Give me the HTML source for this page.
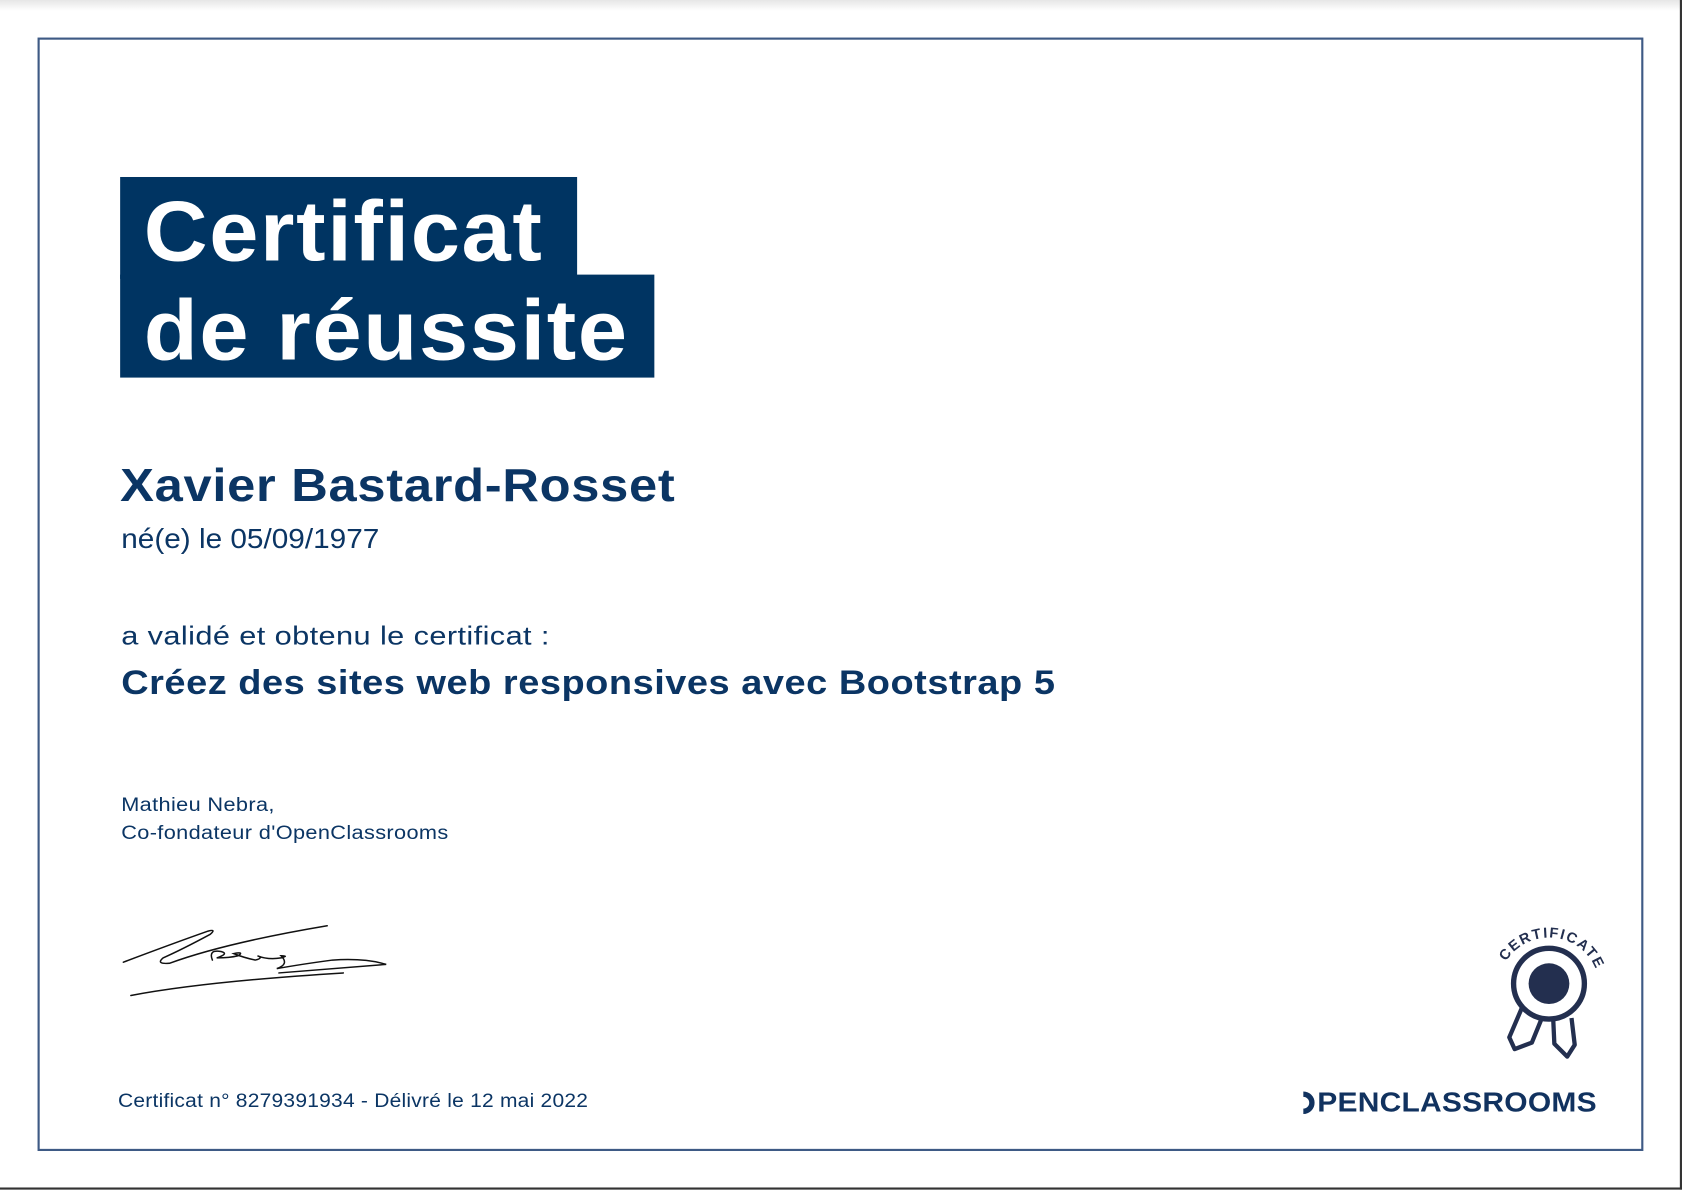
<!DOCTYPE html>
<html><head><meta charset="utf-8">
<style>
html,body{margin:0;padding:0;background:#fff;overflow:hidden;}
body{width:1682px;height:1190px;position:relative;}
#w{position:absolute;left:0;top:0;width:1568px;height:1109px;transform:scale(1.07270);transform-origin:0 0;font-family:"Liberation Sans",sans-serif;color:#0b3564;}
.abs{position:absolute;white-space:nowrap;transform-origin:0 0;}
#shadow{left:0;top:0;width:1568px;height:10px;background:linear-gradient(#e6e6e6,#fff);}
#frame{left:35px;top:35px;width:1493px;height:1034px;border:2px solid #3e5a85;}
.box{background:#003462;}
.t{color:#fff;font-weight:bold;font-size:80px;letter-spacing:1.5px;transform:scaleX(1.03);}
</style></head><body><div id="w">
<div class="abs" id="shadow"></div>
<div class="abs" style="right:0;top:0;width:2px;height:1109px;background:#333"></div>
<div class="abs" style="left:0;bottom:0;width:1568px;height:2px;background:#333"></div>
<div class="abs" id="frame"></div>

<div class="abs box" style="left:112px;top:165px;width:426px;height:95px"></div>
<div class="abs box" style="left:112px;top:256px;width:498px;height:96px"></div>
<div class="abs t" style="left:134px;top:170px;line-height:92px">Certificat</div>
<div class="abs t" style="left:134px;top:262px;line-height:92px">de réussite</div>

<div class="abs" style="left:112px;top:428px;font-size:43px;font-weight:bold;letter-spacing:0.6px;line-height:50px;transform:scaleX(1.098)">Xavier Bastard-Rosset</div>
<div class="abs" style="left:113px;top:486px;font-size:26px;line-height:32px;transform:scaleX(1.067)">né(e) le 05/09/1977</div>
<div class="abs" style="left:113px;top:579px;font-size:24px;letter-spacing:0.3px;line-height:30px;transform:scaleX(1.195)">a validé et obtenu le certificat :</div>
<div class="abs" style="left:113px;top:616px;font-size:32px;font-weight:bold;letter-spacing:0.45px;line-height:40px;transform:scaleX(1.105)">Créez des sites web responsives avec Bootstrap 5</div>
<div class="abs" style="left:113px;top:738px;font-size:18px;letter-spacing:0.3px;line-height:24px;transform:scaleX(1.125)">Mathieu Nebra,</div>
<div class="abs" style="left:113px;top:764px;font-size:18px;letter-spacing:0.3px;line-height:24px;transform:scaleX(1.125)">Co-fondateur d'OpenClassrooms</div>

<svg class="abs" style="left:110px;top:855px" width="270" height="85" viewBox="0 0 270 85">
<g fill="none" stroke="#111" stroke-width="1.4" stroke-linecap="round">
<path d="M5 42 Q50 25 84 13 Q92 11 86 16 Q60 30 42 38 Q35 44 48 43 Q100 24 195 8"/>
<path d="M88 40 Q84 30 96 32 Q104 34 92 38 Q104 38 112 36 Q118 32 108 34 Q118 38 128 40 Q136 38 130 36 Q140 40 152 38 Q160 36 152 36 Q160 44 148 48 Q170 44 200 40 Q230 38 250 44 Q200 48 150 52"/>
<path d="M12 73 Q80 60 210 52"/>
</g></svg>

<div class="abs" style="left:110px;top:1014px;font-size:18px;letter-spacing:0.2px;line-height:24px;transform:scaleX(1.087)">Certificat n° 8279391934 - Délivré le 12 mai 2022</div>

<svg class="abs" style="left:1380px;top:855px" width="130" height="140" viewBox="0 0 130 140">
<defs><path id="arc" d="M17 66 A47 47 0 0 1 111 66"/></defs>
<text font-family="Liberation Sans,sans-serif" font-size="13.5" font-weight="bold" fill="#232f4f" letter-spacing="1.5" text-anchor="middle"><textPath href="#arc" startOffset="53%">CERTIFICATE</textPath></text>
<circle cx="64" cy="62" r="33" fill="none" stroke="#232f4f" stroke-width="5"/>
<circle cx="64" cy="62" r="19" fill="#232f4f"/>
<g fill="none" stroke="#232f4f" stroke-width="4" stroke-linejoin="round">
<path d="M39 84 L27 112 L32 123 L48 117 L57 95"/>
<path d="M68 96 L69 118 L81 130 L88 119 L85 94"/>
</g></svg>

<svg class="abs" style="left:1212px;top:1016px" width="16" height="24" viewBox="0 0 16 24"><path d="M3 4 A8 8 0 1 1 3 20" fill="none" stroke="#11325f" stroke-width="5"/></svg>
<div class="abs" style="left:1228px;top:1011px;font-size:26px;font-weight:bold;color:#11325f;letter-spacing:0.2px;line-height:32px;transform:scaleX(1.075)">PENCLASSROOMS</div>
</div></body></html>
